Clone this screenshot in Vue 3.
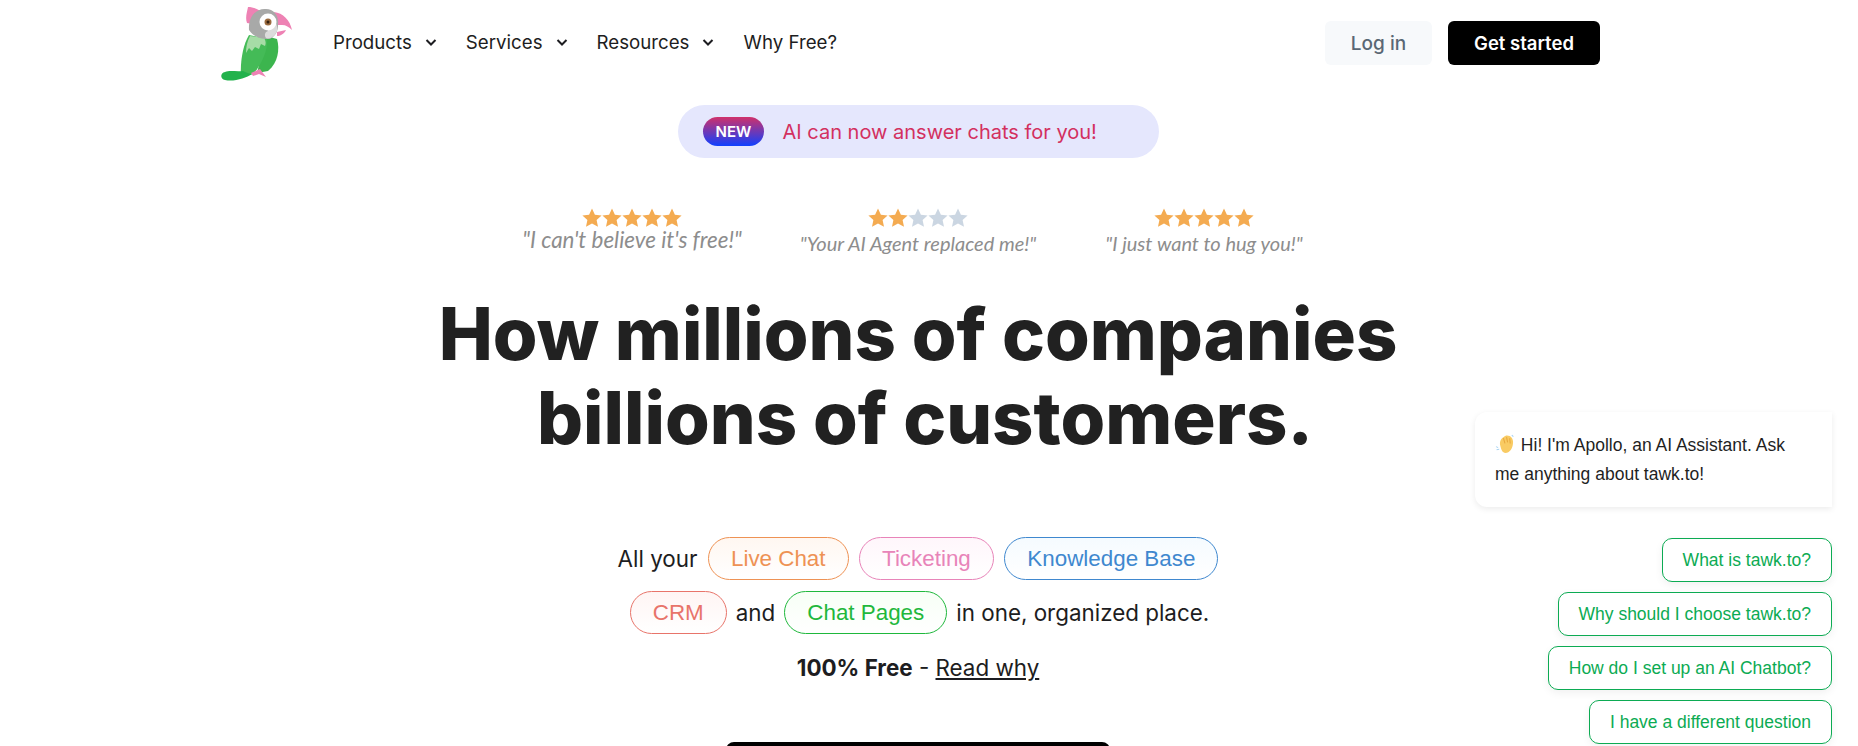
<script setup>
const links = [
  { label: 'Products', caret: true },
  { label: 'Services', caret: true },
  { label: 'Resources', caret: true },
  { label: 'Why Free?', caret: false }
]
const starPath = 'M10 0.500l2.900 6.200 6.700.800-5 4.600 1.400 6.700L10 15.400l-6 3.400 1.400-6.700-5-4.600 6.700-.800z'
const reviews = [
  { quote: '"I can\'t believe it\'s free!"', stars: 5, big: true },
  { quote: '"Your AI Agent replaced me!"', stars: 2, big: false },
  { quote: '"I just want to hug you!"', stars: 5, big: false }
]
const questions = [
  'What is tawk.to?',
  'Why should I choose tawk.to?',
  'How do I set up an AI Chatbot?',
  'I have a different question'
]
</script>

<template>
  <div class="page">
    <header class="nav">
      <svg class="logo" viewBox="0 0 74 78" width="74" height="78">
        <!-- crest and beak -->
        <path d="M28 4 C33 4 38 6 42 9 L33 21 L27 20 C25 15 27 9 28 4Z" fill="#ee82b4" />
        <path d="M54 9 C63 10 70 17 72 27 C69 24 66 22 62 22 L57 22Z" fill="#ee82b4" />
        <path d="M57 29 L66 27 C64 31 60 33 57 33Z" fill="#ee82b4" />
        <!-- body -->
        <path d="M46 33 L57 36 C60 46 58 60 48 68 L37 70 Z" fill="#3cb54e" />
        <path d="M29 32 L47 36 C48 45 43 60 33 71 L21 74 C20 58 23 42 29 32Z" fill="#44bb57" />
        <path d="M30 33 L44 35 C46 38 46 41 45 43 L41 41 L39 46 L35 44 L32 48 L29 45 L26 50 C26 44 27 39 30 33Z" fill="#a6dca6" />
        <!-- head -->
        <path d="M29 27 C28 14 36 5 46 6 C54 6 59 13 58 21 C58 27 57 32 50 36 C43 36 34 35 29 27Z" fill="#a8a9a8" />
        <path d="M50 14 C55 16 58 22 57 28 C55 33 50 37 46 35 C44 32 45 29 48 28Z" fill="#dcdcdc" />
        <circle cx="48" cy="19" r="8.500" fill="#fff" />
        <circle cx="48" cy="19" r="3.500" fill="#9a6a3e" />
        <circle cx="48" cy="19" r="1.500" fill="#33200f" />
        <!-- feet and tail -->
        <path d="M31 70 L40 66 L46 74 L39 71 L33 73Z" fill="#ee82b4" />
        <path d="M23 68 C27 70 30 71 32 71 C26 75 14 79 5 77 C0 76 0 70 5 69 C10 67 16 69 23 68Z" fill="#22b24c" />
      </svg>
      <nav class="links">
        <a v-for="link in links" :key="link.label" class="link">
          {{ link.label }}
          <svg v-if="link.caret" class="caret" viewBox="0 0 14 9" width="14" height="9">
            <path d="M2.500 2l4.500 4.500L11.500 2" fill="none" stroke="#1d1d21" stroke-width="2" />
          </svg>
        </a>
      </nav>
      <div class="actions">
        <button class="login">Log in</button>
        <button class="started">Get started</button>
      </div>
    </header>

    <main class="hero">
      <div class="announce">
        <span class="new">NEW</span>
        <span class="announce-text">AI can now answer chats for you!</span>
      </div>

      <div class="reviews">
        <div v-for="r in reviews" :key="r.quote" class="review" :class="{ big: r.big }">
          <div class="stars">
            <svg v-for="n in 5" :key="n" viewBox="0 0 20 20" width="20" height="20">
              <path :d="starPath" :fill="n <= r.stars ? '#f4ab51' : '#cbd6e2'" />
            </svg>
          </div>
          <div class="quote">{{ r.quote }}</div>
        </div>
      </div>

      <h1 class="title">How millions of companies<br /><span class="title-second">billions of customers.</span></h1>

      <div class="line first">
        All your
        <span class="tag orange">Live Chat</span>
        <span class="tag pink">Ticketing</span>
        <span class="tag blue">Knowledge Base</span>
      </div>
      <div class="line second">
        <span class="tag red">CRM</span>
        and
        <span class="tag green">Chat Pages</span>
        in one, organized place.
      </div>
      <p class="free"><b>100% Free</b> - <a class="why">Read why</a></p>
      <div class="cta"></div>
    </main>

    <aside class="chat">
      <div class="bubble">
        <svg class="wave" viewBox="0 0 20 20" width="21" height="21">
          <path d="M5 11 C4 7 6 4 8 3 C10 1 12 1 14 2 C16 3 18 6 17 10 C16.500 14 14 18 10 18 C7 18 6 15 5 11Z" fill="#f9cb63" />
          <path d="M8 4l1.500 5M11 3l1 5M14 4l.5 5" stroke="#e8a83e" stroke-width="1" fill="none" />
          <path d="M1 12l2 1M1.500 15l2.500-.5M16 1l1.500 1.500" stroke="#a9d3f2" stroke-width="1" fill="none" />
        </svg>
        Hi! I'm Apollo, an AI Assistant. Ask me anything about tawk.to!
      </div>
      <div class="questions">
        <button v-for="q in questions" :key="q" class="question">{{ q }}</button>
      </div>
    </aside>
  </div>
</template>

<style>
html, body {
  margin: 0;
  background: #fff;
}
</style>

<style scoped>
.page {
  position: relative;
  width: 1858px;
  height: 746px;
  overflow: hidden;
  background: #fff;
  font-family: Inter, "Liberation Sans", sans-serif;
  color: #1d1d21;
}

.nav {
  display: flex;
  align-items: center;
  height: 84px;
  width: 1380px;
  margin-left: 220px;
}

.logo {
  flex: none;
}

.links {
  display: flex;
  align-items: center;
  gap: 28px;
  margin-left: 39px;
  padding-top: 1px;
  font-size: 18.7px;
  line-height: 24px;
}

.link {
  display: flex;
  align-items: center;
  gap: 12px;
  white-space: nowrap;
}

.actions {
  display: flex;
  gap: 16px;
  margin-left: auto;
  padding-top: 2px;
}

.login,
.started {
  height: 44px;
  border: none;
  border-radius: 6px;
  font-family: inherit;
}

.login {
  width: 107px;
  background: #f7f9fb;
  color: #5a6774;
  font-size: 19px;
  font-weight: 500;
}

.started {
  width: 152px;
  background: #000;
  color: #fff;
  font-size: 18.5px;
  font-weight: 600;
}

.hero {
  width: 1836px;
  display: flex;
  flex-direction: column;
  align-items: center;
}

.announce {
  display: flex;
  align-items: center;
  gap: 19px;
  box-sizing: border-box;
  width: 481px;
  height: 53px;
  margin-top: 21px;
  padding-left: 25px;
  border-radius: 27px;
  background: #e5e7fd;
}

.new {
  width: 60px;
  height: 29px;
  border-radius: 15px;
  background: linear-gradient(180deg, #d0316a, #1040ff);
  color: #fff;
  font-size: 15px;
  font-weight: 600;
  line-height: 29px;
  text-align: center;
  padding-left: 1px;
}

.announce-text {
  font-size: 20px;
  color: #d3305f;
  white-space: nowrap;
}

.reviews {
  display: flex;
  justify-content: center;
  width: 100%;
  height: 62px;
  margin-top: 50px;
}

.review {
  width: 286px;
  text-align: center;
}

.stars {
  display: flex;
  justify-content: center;
  height: 20px;
}

.quote {
  margin-top: 1px;
  font-family: Lato, "Open Sans", sans-serif;
  font-style: italic;
  font-size: 20px;
  line-height: 28px;
  color: #8d8d8d;
  white-space: nowrap;
}

.review.big .quote {
  margin-top: 0;
  font-size: 22.4px;
  line-height: 24px;
}

.title {
  margin: 22px 0 0;
  font-size: 72.3px;
  font-weight: 800;
  line-height: 84px;
  text-align: center;
  color: #212121;
  white-space: nowrap;
}

.title-second {
  padding-left: 14px;
}

.line {
  display: flex;
  align-items: center;
  height: 44px;
  font-size: 22.4px;
  white-space: nowrap;
}

.line.first {
  gap: 10.5px;
  margin-top: 76px;
}

.line.second {
  gap: 9px;
  margin-top: 10px;
  padding-left: 3px;
}

.tag {
  box-sizing: border-box;
  height: 43px;
  padding: 0 22px;
  border: 1px solid;
  border-radius: 22px;
  font-family: "Liberation Sans", sans-serif;
  font-size: 22.4px;
  line-height: 41px;
  background: #fff;
}

.orange { color: #ee9254; border-color: #ee9254; background: linear-gradient(180deg, #fff7f1, #fff); }
.pink { color: #e884b9; border-color: #e884b9; background: linear-gradient(180deg, #fff6fb, #fff); }
.blue { color: #3f88cf; border-color: #3f88cf; background: linear-gradient(180deg, #f5fbff, #fff); }
.red { color: #e8746a; border-color: #e8746a; background: linear-gradient(180deg, #fff5f4, #fff); }
.green { color: #1fb83c; border-color: #1fb83c; background: linear-gradient(180deg, #f7fff6, #fff); }

.free {
  margin: 17px 0 0;
  font-size: 22.4px;
  line-height: 34px;
}

.free b {
  font-weight: 700;
}

.why {
  text-decoration: underline;
}

.cta {
  width: 384px;
  height: 60px;
  margin-top: 57px;
  border-radius: 8px;
  background: #000;
}

.chat {
  position: absolute;
  left: 1475px;
  top: 412px;
  width: 357px;
  font-family: "Liberation Sans", sans-serif;
  font-size: 17.5px;
}

.bubble {
  box-sizing: border-box;
  height: 95px;
  padding: 19px 20px;
  border-radius: 12px 0 0 12px;
  background: #fff;
  box-shadow: 0 2px 6px rgba(0, 0, 0, 0.08);
  line-height: 29px;
  color: #1f1f1f;
}

.wave {
  vertical-align: -4px;
}

.questions {
  display: flex;
  flex-direction: column;
  align-items: flex-end;
  gap: 10px;
  margin-top: 31px;
}

.question {
  box-sizing: border-box;
  height: 44px;
  padding: 0 20px;
  border: 1px solid #0cab53;
  border-radius: 10px;
  background: #fff;
  box-shadow: 0 3px 8px rgba(0, 0, 0, 0.06);
  color: #0cab53;
  font-family: inherit;
  font-size: 17.5px;
  white-space: nowrap;
}
</style>
